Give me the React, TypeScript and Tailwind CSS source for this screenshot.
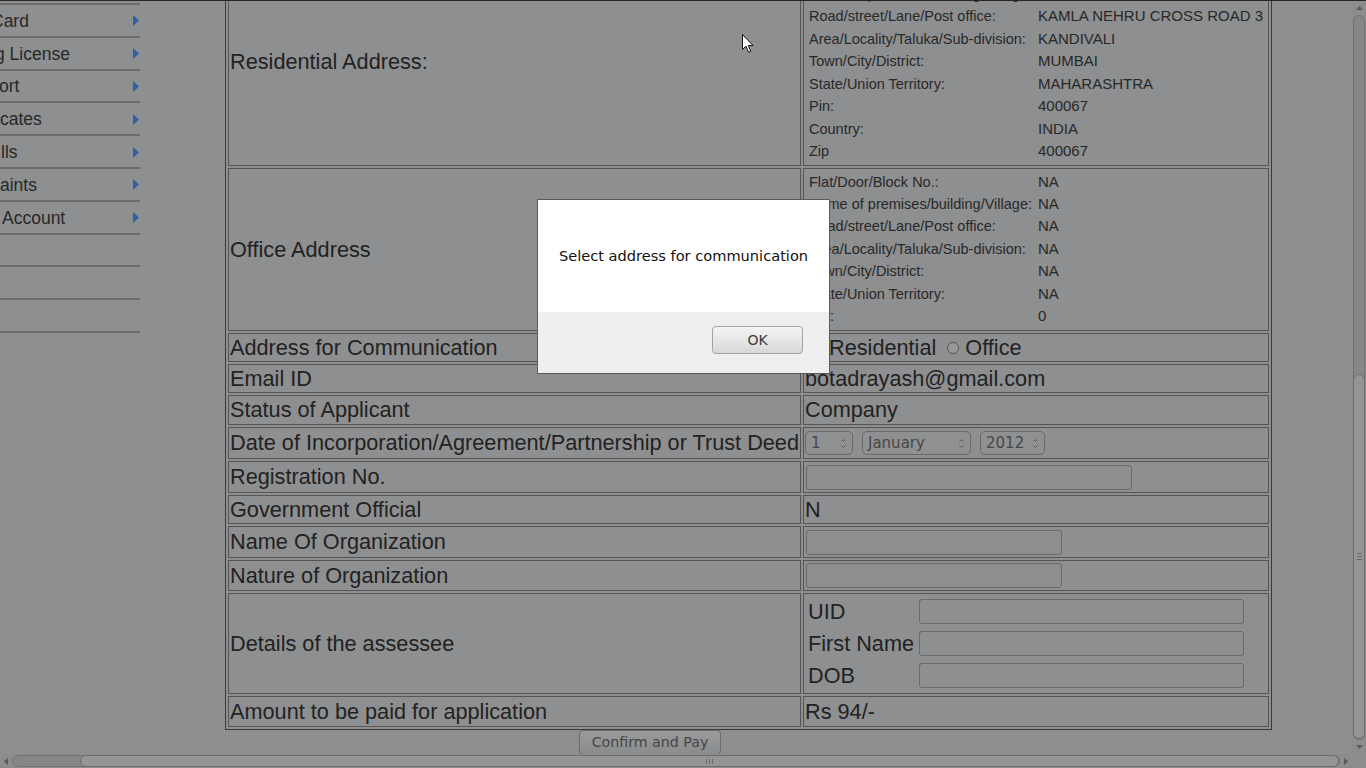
import React from "react";

type Pair = [string, string];

const residential: Pair[] = [
  ["Flat/Door/Block No.:", "A-502"],
  ["Name of premises/building/Village:", "SHANTI NAGAR"],
  ["Road/street/Lane/Post office:", "KAMLA NEHRU CROSS ROAD 3"],
  ["Area/Locality/Taluka/Sub-division:", "KANDIVALI"],
  ["Town/City/District:", "MUMBAI"],
  ["State/Union Territory:", "MAHARASHTRA"],
  ["Pin:", "400067"],
  ["Country:", "INDIA"],
  ["Zip", "400067"],
];

const office: Pair[] = [
  ["Flat/Door/Block No.:", "NA"],
  ["Name of premises/building/Village:", "NA"],
  ["Road/street/Lane/Post office:", "NA"],
  ["Area/Locality/Taluka/Sub-division:", "NA"],
  ["Town/City/District:", "NA"],
  ["State/Union Territory:", "NA"],
  ["Pin:", "0"],
];

const menu = [
  { text: "Card", cls: "ml-[-9px]" },
  { text: "g License", cls: "ml-[-5px]" },
  { text: "ort", cls: "ml-[-1px]" },
  { text: "cates", cls: "ml-0" },
  { text: "lls", cls: "ml-[1px]" },
  { text: "aints", cls: "ml-0" },
  { text: "Account", cls: "ml-[2px]" },
];

function Arrow() {
  return (
    <svg width="6" height="11" viewBox="0 0 6 11" className="shrink-0">
      <path d="M0 0 L6 5.5 L0 11 Z" fill="#2f60a6" />
    </svg>
  );
}

function SelectArrows() {
  return (
    <svg width="7" height="13" viewBox="0 0 7 13" className="shrink-0">
      <path d="M1.5 4.5 L3.5 2.5 L5.5 4.5" stroke="#555" strokeWidth="1" fill="none" />
      <path d="M1.5 8.5 L3.5 10.5 L5.5 8.5" stroke="#555" strokeWidth="1" fill="none" />
    </svg>
  );
}

function FakeSelect({ value, w }: { value: string; w: string }) {
  return (
    <div
      className={`${w} h-[24px] flex items-center justify-between rounded-[5px] border border-[#696969] bg-[#8f9091] pl-[5px] pr-[5px] text-[15px] leading-[20px] text-[#474747] font-['DejaVu_Sans',sans-serif]`}
    >
      <span>{value}</span>
      <SelectArrows />
    </div>
  );
}

function Field({ w }: { w: string }) {
  return <div className={`${w} h-[25px] rounded-[3px] border border-[#6a6a6a] bg-[#8e8f90]`} />;
}

function AddrGrid({ rows }: { rows: Pair[] }) {
  return (
    <div className="grid grid-cols-[229px_1fr] pl-[4px] text-[14.5px] leading-[22.4px] text-[#282828]">
      {rows.map(([k, v]) => (
        <React.Fragment key={k}>
          <div className="whitespace-nowrap">{k}</div>
          <div className="whitespace-nowrap text-[15px]">{v}</div>
        </React.Fragment>
      ))}
    </div>
  );
}

const cell = "border border-[#555] align-middle p-[1px] text-[21.7px] leading-[24px] text-[#222] whitespace-nowrap";

function Row({ h, name, children }: { h: string; name: string; children: React.ReactNode }) {
  return (
    <tr>
      <td className={`${cell} ${h}`}>{name}</td>
      <td className={`${cell} ${h}`}>{children}</td>
    </tr>
  );
}

export default function App() {
  return (
    <div className="relative w-[1366px] h-[768px] overflow-hidden bg-[#8e8f90] flex flex-col font-['Liberation_Sans',Arial,sans-serif]">
      <div className="h-px bg-[#262626] shrink-0" />
      <div className="flex flex-1 min-h-0">
        <div className="w-[1352px] overflow-hidden">
          <div className="flex">
            {/* sidebar */}
            <div className="w-[140px] shrink-0 mt-[2px] border-t-2 border-[#6c6c6c]">
              {menu.map((m) => (
                <div
                  key={m.text}
                  className="h-[32.8px] border-b-2 border-[#6c6c6c] flex items-center justify-between pr-[1px] pt-[1px] overflow-hidden text-[17.5px] text-[#282828]"
                >
                  <span className={`${m.cls} whitespace-nowrap`}>{m.text}</span>
                  <Arrow />
                </div>
              ))}
              <div className="h-[32.8px] border-b-2 border-[#6c6c6c]" />
              <div className="h-[32.8px] border-b-2 border-[#6c6c6c]" />
              <div className="h-[32.8px] border-b-2 border-[#6c6c6c]" />
            </div>

            {/* main form */}
            <div className="ml-[85px] mt-[-47px]">
              <table className="table-fixed w-[1047px] border-separate border-spacing-[2px] border border-[#3a3a3a]">
                <colgroup>
                  <col className="w-[573px]" />
                  <col className="w-[466px]" />
                </colgroup>
                <tbody>
                  <Row h="h-[209px]" name="Residential Address:">
                    <AddrGrid rows={residential} />
                  </Row>
                  <Row h="h-[163px]" name="Office Address">
                    <div className="-mt-[1px]">
                      <AddrGrid rows={office} />
                    </div>
                  </Row>
                  <Row h="h-[29px]" name="Address for Communication">
                    <div className="flex items-center">
                      <span className="ml-[7px] mr-[5px] w-[12px] h-[12px] rounded-full border border-[#5a5a5a] bg-[#979899]" />
                      <span>Residential</span>
                      <span className="ml-[11px] mr-[6px] w-[12px] h-[12px] rounded-full border border-[#5a5a5a] bg-[#979899]" />
                      <span>Office</span>
                    </div>
                  </Row>
                  <Row h="h-[29px]" name="Email ID">
                    <div>botadrayash@gmail.com</div>
                  </Row>
                  <Row h="h-[30px]" name="Status of Applicant">
                    <div>Company</div>
                  </Row>
                  <Row h="h-[32px]" name="Date of Incorporation/Agreement/Partnership or Trust Deed">
                    <div className="flex gap-[9px]">
                      <FakeSelect value="1" w="w-[48px]" />
                      <FakeSelect value="January" w="w-[109px]" />
                      <FakeSelect value="2012" w="w-[65px]" />
                    </div>
                  </Row>
                  <Row h="h-[32px]" name="Registration No.">
                    <div className="pl-[1px]">
                      <Field w="w-[326px]" />
                    </div>
                  </Row>
                  <Row h="h-[29px]" name="Government Official">
                    <div>N</div>
                  </Row>
                  <Row h="h-[32px]" name="Name Of Organization">
                    <div className="pl-[1px]">
                      <Field w="w-[256px]" />
                    </div>
                  </Row>
                  <Row h="h-[31px]" name="Nature of Organization">
                    <div className="pl-[1px]">
                      <Field w="w-[256px]" />
                    </div>
                  </Row>
                  <Row h="h-[101px]" name="Details of the assessee">
                    <div className="grid grid-cols-[111px_1fr] gap-y-[7px] pl-[3px] items-center">
                      <span>UID</span>
                      <Field w="w-[325px]" />
                      <span>First Name</span>
                      <Field w="w-[325px]" />
                      <span>DOB</span>
                      <Field w="w-[325px]" />
                    </div>
                  </Row>
                  <Row h="h-[31px]" name="Amount to be paid for application">
                    <div>Rs 94/-</div>
                  </Row>
                </tbody>
              </table>
              <div className="pl-[354px]">
                <button className="w-[142px] h-[25px] rounded-[4px] border border-[#6b6b6b] bg-gradient-to-b from-[#9a9b9c] to-[#8a8b8c] text-[14.2px] text-[#454545] font-['DejaVu_Sans',sans-serif]">
                  Confirm and Pay
                </button>
              </div>
            </div>
          </div>
        </div>

        {/* vertical scrollbar */}
        <div className="w-[14px] flex flex-col bg-[#8b8c8d]">
          <div className="h-[14px] flex items-center justify-center">
            <svg width="7" height="4" viewBox="0 0 7 4">
              <path d="M0 4 L3.5 0 L7 4 Z" fill="#5a5a5a" />
            </svg>
          </div>
          <div className="flex-1 flex flex-col mx-[1px] rounded-full border border-[#737373] bg-[#868788]">
            <div className="h-[358px]" />
            <div className="flex-1 rounded-full border border-[#6e6e6e] bg-[#949596] flex items-center justify-center mx-[-1px]">
              <div className="flex flex-col gap-[2px]">
                <div className="w-[5px] h-px bg-[#6a6a6a]" />
                <div className="w-[5px] h-px bg-[#6a6a6a]" />
                <div className="w-[5px] h-px bg-[#6a6a6a]" />
              </div>
            </div>
          </div>
          <div className="h-[14px] flex items-center justify-center">
            <svg width="7" height="4" viewBox="0 0 7 4">
              <path d="M0 0 L3.5 4 L7 0 Z" fill="#5a5a5a" />
            </svg>
          </div>
        </div>
      </div>

      {/* horizontal scrollbar */}
      <div className="h-[14px] shrink-0 flex bg-[#8b8c8d]">
        <div className="w-[12px] flex items-center justify-center">
          <svg width="4" height="7" viewBox="0 0 4 7">
            <path d="M4 0 L0 3.5 L4 7 Z" fill="#5a5a5a" />
          </svg>
        </div>
        <div className="flex-1 flex my-[1px] rounded-full border border-[#737373] bg-[#868788]">
          <div className="w-[67px]" />
          <div className="flex-1 rounded-full border border-[#6e6e6e] bg-[#949596] flex items-center justify-center my-[-1px]">
            <div className="flex gap-[2px]">
              <div className="w-px h-[5px] bg-[#6a6a6a]" />
              <div className="w-px h-[5px] bg-[#6a6a6a]" />
              <div className="w-px h-[5px] bg-[#6a6a6a]" />
            </div>
          </div>
        </div>
        <div className="w-[12px] flex items-center justify-center">
          <svg width="4" height="7" viewBox="0 0 4 7">
            <path d="M0 0 L4 3.5 L0 7 Z" fill="#5a5a5a" />
          </svg>
        </div>
        <div className="w-[14px]" />
      </div>

      {/* alert dialog */}
      <div className="absolute left-[537px] top-[199px] w-[293px] h-[175px] border border-[#5a5a5a] flex flex-col font-['DejaVu_Sans',sans-serif]">
        <div className="flex-1 bg-white flex items-center justify-center text-[14.6px] text-[#111]">
          Select address for communication
        </div>
        <div className="h-[61px] bg-[#efefef] flex justify-end pt-[14px] pr-[26px]">
          <button className="w-[91px] h-[28px] rounded-[4px] border border-[#a3a3a3] bg-gradient-to-b from-[#f4f4f4] to-[#d8d8d8] text-[14px] text-[#3c3c3c]">
            OK
          </button>
        </div>
      </div>

      {/* mouse pointer */}
      <svg className="absolute left-[742px] top-[34px]" width="12" height="20" viewBox="0 0 12 20">
        <path d="M0.5 0.5 L0.5 15.5 L4 12.2 L6.6 18.3 L8.8 17.4 L6.3 11.5 L11 11.5 Z" fill="#fff" stroke="#111" strokeWidth="1" />
      </svg>
    </div>
  );
}
